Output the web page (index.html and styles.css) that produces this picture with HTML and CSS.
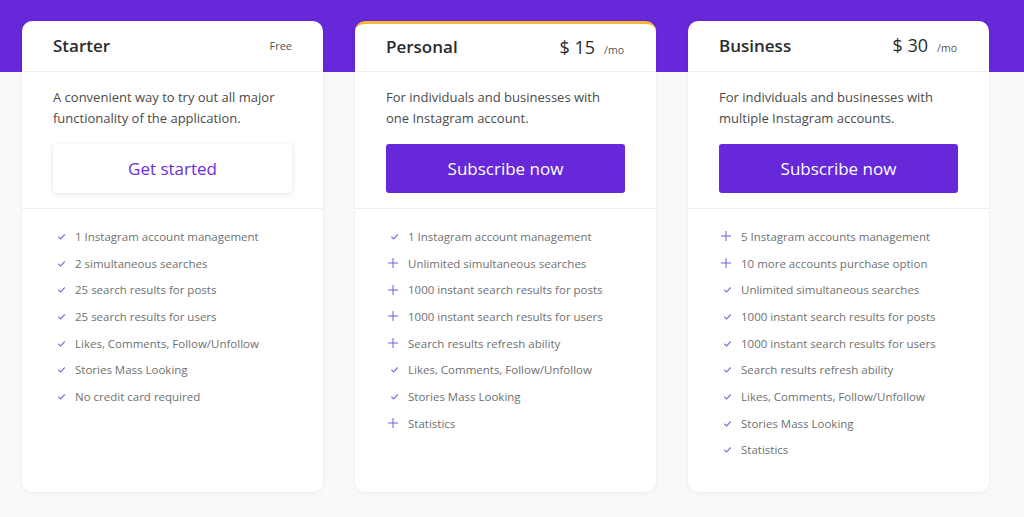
FILE: index.html
```html
<!DOCTYPE html>
<html lang="en">
<head>
<meta charset="utf-8">
<title>Pricing</title>
<link rel="stylesheet" href="styles.css">
</head>
<body>
<div class="band"></div>
<div class="plans">
  <div class="card">
    <div class="card-head">
      <span class="title">Starter</span>
      <span class="free">Free</span>
    </div>
    <div class="card-body">
      <p class="desc">A convenient way to try out all major functionality of the application.</p>
      <a class="btn btn-light">Get started</a>
    </div>
    <ul class="features">
      <li><svg class="ic" viewBox="0 0 10 10"><path d="M1.5 5.3 L4 7.6 L8.6 2.8"/></svg>1 Instagram account management</li>
      <li><svg class="ic" viewBox="0 0 10 10"><path d="M1.5 5.3 L4 7.6 L8.6 2.8"/></svg>2 simultaneous searches</li>
      <li><svg class="ic" viewBox="0 0 10 10"><path d="M1.5 5.3 L4 7.6 L8.6 2.8"/></svg>25 search results for posts</li>
      <li><svg class="ic" viewBox="0 0 10 10"><path d="M1.5 5.3 L4 7.6 L8.6 2.8"/></svg>25 search results for users</li>
      <li><svg class="ic" viewBox="0 0 10 10"><path d="M1.5 5.3 L4 7.6 L8.6 2.8"/></svg>Likes, Comments, Follow/Unfollow</li>
      <li><svg class="ic" viewBox="0 0 10 10"><path d="M1.5 5.3 L4 7.6 L8.6 2.8"/></svg>Stories Mass Looking</li>
      <li><svg class="ic" viewBox="0 0 10 10"><path d="M1.5 5.3 L4 7.6 L8.6 2.8"/></svg>No credit card required</li>
    </ul>
  </div>

  <div class="card card-featured">
    <div class="card-head">
      <span class="title">Personal</span>
      <span class="price">$ 15<small>/mo</small></span>
    </div>
    <div class="card-body">
      <p class="desc">For individuals and businesses with one Instagram account.</p>
      <a class="btn btn-primary">Subscribe now</a>
    </div>
    <ul class="features">
      <li><svg class="ic" viewBox="0 0 10 10"><path d="M1.5 5.3 L4 7.6 L8.6 2.8"/></svg>1 Instagram account management</li>
      <li><svg class="ic plus" viewBox="0 0 10 10"><path d="M5 0 V10 M0 5 H10"/></svg>Unlimited simultaneous searches</li>
      <li><svg class="ic plus" viewBox="0 0 10 10"><path d="M5 0 V10 M0 5 H10"/></svg>1000 instant search results for posts</li>
      <li><svg class="ic plus" viewBox="0 0 10 10"><path d="M5 0 V10 M0 5 H10"/></svg>1000 instant search results for users</li>
      <li><svg class="ic plus" viewBox="0 0 10 10"><path d="M5 0 V10 M0 5 H10"/></svg>Search results refresh ability</li>
      <li><svg class="ic" viewBox="0 0 10 10"><path d="M1.5 5.3 L4 7.6 L8.6 2.8"/></svg>Likes, Comments, Follow/Unfollow</li>
      <li><svg class="ic" viewBox="0 0 10 10"><path d="M1.5 5.3 L4 7.6 L8.6 2.8"/></svg>Stories Mass Looking</li>
      <li><svg class="ic plus" viewBox="0 0 10 10"><path d="M5 0 V10 M0 5 H10"/></svg>Statistics</li>
    </ul>
  </div>

  <div class="card">
    <div class="card-head">
      <span class="title">Business</span>
      <span class="price">$ 30<small>/mo</small></span>
    </div>
    <div class="card-body">
      <p class="desc">For individuals and businesses with multiple Instagram accounts.</p>
      <a class="btn btn-primary">Subscribe now</a>
    </div>
    <ul class="features">
      <li><svg class="ic plus" viewBox="0 0 10 10"><path d="M5 0 V10 M0 5 H10"/></svg>5 Instagram accounts management</li>
      <li><svg class="ic plus" viewBox="0 0 10 10"><path d="M5 0 V10 M0 5 H10"/></svg>10 more accounts purchase option</li>
      <li><svg class="ic" viewBox="0 0 10 10"><path d="M1.5 5.3 L4 7.6 L8.6 2.8"/></svg>Unlimited simultaneous searches</li>
      <li><svg class="ic" viewBox="0 0 10 10"><path d="M1.5 5.3 L4 7.6 L8.6 2.8"/></svg>1000 instant search results for posts</li>
      <li><svg class="ic" viewBox="0 0 10 10"><path d="M1.5 5.3 L4 7.6 L8.6 2.8"/></svg>1000 instant search results for users</li>
      <li><svg class="ic" viewBox="0 0 10 10"><path d="M1.5 5.3 L4 7.6 L8.6 2.8"/></svg>Search results refresh ability</li>
      <li><svg class="ic" viewBox="0 0 10 10"><path d="M1.5 5.3 L4 7.6 L8.6 2.8"/></svg>Likes, Comments, Follow/Unfollow</li>
      <li><svg class="ic" viewBox="0 0 10 10"><path d="M1.5 5.3 L4 7.6 L8.6 2.8"/></svg>Stories Mass Looking</li>
      <li><svg class="ic" viewBox="0 0 10 10"><path d="M1.5 5.3 L4 7.6 L8.6 2.8"/></svg>Statistics</li>
    </ul>
  </div>
</div>
</body>
</html>
```

FILE: styles.css
```css
* { box-sizing: border-box; }
html, body { margin: 0; padding: 0; }
body {
  background: #f9f9f9;
  font-family: "Open Sans", "Liberation Sans", sans-serif;
  width: 1024px;
  height: 517px;
  overflow: hidden;
  position: relative;
}
.band {
  height: 72px;
  background: #6628d8;
}
.plans {
  display: flex;
  gap: 32px;
  padding-left: 22px;
  margin-top: -51px;
  position: relative;
}
.card {
  width: 301px;
  height: 471px;
  background: #fff;
  border-radius: 10px;
  box-shadow: 0 1px 4px rgba(0,0,0,0.06);
  overflow: hidden;
}
.card-featured {
  border-top: 3px solid #f5b634;
}
.card-featured .card-head { height: 48px; }
.card-head {
  height: 51px;
  display: flex;
  align-items: center;
  justify-content: space-between;
  padding: 0 31px 2px;
  border-bottom: 1px solid #efefef;
}
.title {
  font-size: 17px;
  font-weight: 600;
  color: #2b2b2b;
}
.free {
  font-size: 11px;
  color: #555;
}
.price {
  font-size: 18px;
  color: #2b2b2b;
  margin-right: 1px;
}
.price small {
  font-size: 10.5px;
  color: #555;
  margin-left: 9px;
}
.card-body {
  padding: 15px 31px 15px;
  border-bottom: 1px solid #efefef;
}
.desc {
  margin: 0 0 15px;
  font-size: 13px;
  line-height: 21px;
  color: #4a4a4a;
}
.btn {
  display: flex;
  align-items: center;
  justify-content: center;
  height: 49px;
  border-radius: 3px;
  font-size: 17px;
}
.btn-light {
  background: #fff;
  color: #6a2fd9;
  box-shadow: 0 1px 5px rgba(0,0,0,0.12);
}
.btn-primary {
  background: #6628d8;
  color: #fff;
}
.features {
  list-style: none;
  margin: 0;
  padding: 14px 31px 0 31px;
}
.features li {
  display: flex;
  align-items: center;
  height: 26.7px;
  font-size: 11.5px;
  color: #707070;
}
.ic {
  flex: none;
  width: 9px;
  height: 9px;
  margin: 0 9px 0 4px;
  fill: none;
  stroke: #7b70d4;
  stroke-width: 1.3;
}
.ic.plus {
  width: 10px;
  height: 10px;
  margin: 0 10px 0 2px;
  stroke: #6b61d6;
  stroke-width: 1;
}
```
